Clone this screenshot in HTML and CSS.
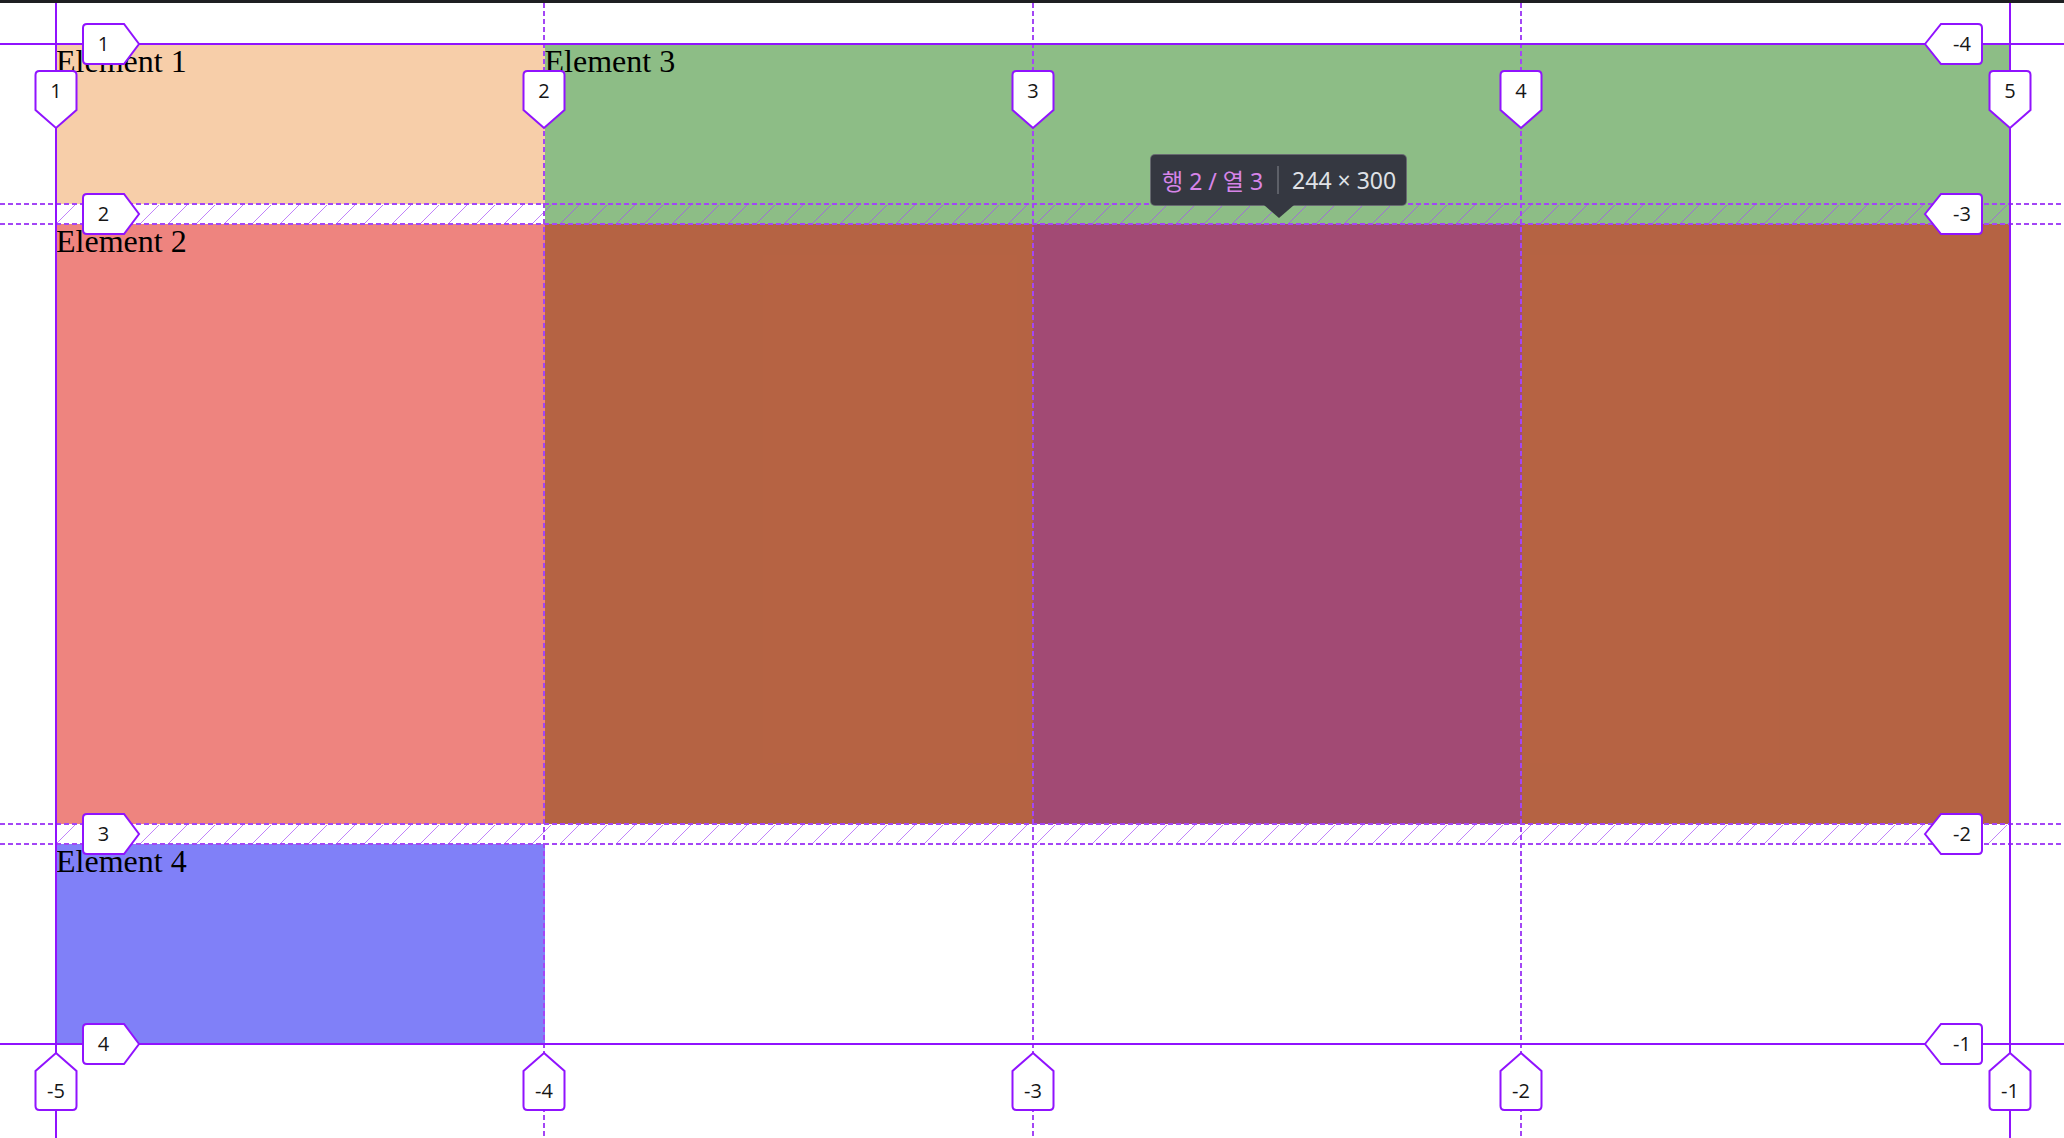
FILE: index.html
```html
<!DOCTYPE html>
<html lang="ko">
<head>
<meta charset="utf-8">
<title>Grid inspector</title>
<link rel="stylesheet" href="styles.css">
</head>
<body>
<div class="topbar"></div>
<main class="stage">
  <div class="grid">
    <div class="item e1">Element 1</div>
    <div class="item e3">Element 3</div>
    <div class="item e2">Element 2</div>
    <div class="cell-hl"></div>
    <div class="item e4">Element 4</div>
  </div>
</main>

<svg class="overlay" width="2064" height="1138" viewBox="0 0 2064 1138" xmlns="http://www.w3.org/2000/svg">
  <defs>
    <pattern id="hatch" patternUnits="userSpaceOnUse" x="0" y="204" width="28" height="20">
      <line x1="1" y1="19" x2="19" y2="1" class="hatch-line"/>
    </pattern>
    <path id="bl" d="M4,-20 L41,-20 L56,0 L41,20 L4,20 Q0,20 0,16 L0,-16 Q0,-20 4,-20 Z"/>
    <path id="br" d="M0,0 L16,-20 L53,-20 Q57,-20 57,-16 L57,16 Q57,20 53,20 L16,20 Z"/>
    <path id="bt" d="M-16.5,71 L16.5,71 Q20.5,71 20.5,75 L20.5,110 L0,128 L-20.5,110 L-20.5,75 Q-20.5,71 -16.5,71 Z"/>
    <path id="bb" d="M0,1053 L20.5,1071 L20.5,1106 Q20.5,1110 16.5,1110 L-16.5,1110 Q-20.5,1110 -20.5,1106 L-20.5,1071 Z"/>
  </defs>

  <!-- gap hatching -->
  <rect x="56" y="204" width="1954" height="20" fill="url(#hatch)"/>
  <rect x="56" y="824" width="1954" height="20" fill="url(#hatch)"/>

  <!-- dashed (gap / inner) lines -->
  <g class="dash">
    <line x1="0" y1="204" x2="2064" y2="204"/>
    <line x1="0" y1="224" x2="2064" y2="224"/>
    <line x1="0" y1="824" x2="2064" y2="824"/>
    <line x1="0" y1="844" x2="2064" y2="844"/>
    <line x1="544" y1="3" x2="544" y2="1138"/>
    <line x1="1033" y1="3" x2="1033" y2="1138"/>
    <line x1="1521" y1="3" x2="1521" y2="1138"/>
  </g>

  <!-- solid outer lines -->
  <g class="solid">
    <line x1="0" y1="44" x2="2064" y2="44"/>
    <line x1="0" y1="1044" x2="2064" y2="1044"/>
    <line x1="56" y1="3" x2="56" y2="1138"/>
    <line x1="2010" y1="3" x2="2010" y2="1138"/>
  </g>

  <!-- badges -->
  <g class="badge">
    <use href="#bl" transform="translate(83,44)"/>
    <use href="#bl" transform="translate(83,214)"/>
    <use href="#bl" transform="translate(83,834)"/>
    <use href="#bl" transform="translate(83,1044)"/>

    <use href="#br" transform="translate(1925,44)"/>
    <use href="#br" transform="translate(1925,214)"/>
    <use href="#br" transform="translate(1925,834)"/>
    <use href="#br" transform="translate(1925,1044)"/>

    <use href="#bt" transform="translate(56,0)"/>
    <use href="#bt" transform="translate(544,0)"/>
    <use href="#bt" transform="translate(1033,0)"/>
    <use href="#bt" transform="translate(1521,0)"/>
    <use href="#bt" transform="translate(2010,0)"/>

    <use href="#bb" transform="translate(56,0)"/>
    <use href="#bb" transform="translate(544,0)"/>
    <use href="#bb" transform="translate(1033,0)"/>
    <use href="#bb" transform="translate(1521,0)"/>
    <use href="#bb" transform="translate(2010,0)"/>
  </g>

  <g class="blabel">
    <text x="103.5" y="43">1</text>
    <text x="103.5" y="213">2</text>
    <text x="103.5" y="833">3</text>
    <text x="103.5" y="1043">4</text>

    <text x="1962" y="43">-4</text>
    <text x="1962" y="213">-3</text>
    <text x="1962" y="833">-2</text>
    <text x="1962" y="1043">-1</text>

    <text x="56" y="90">1</text>
    <text x="544" y="90">2</text>
    <text x="1033" y="90">3</text>
    <text x="1521" y="90">4</text>
    <text x="2010" y="90">5</text>

    <text x="56" y="1090">-5</text>
    <text x="544" y="1090">-4</text>
    <text x="1033" y="1090">-3</text>
    <text x="1521" y="1090">-2</text>
    <text x="2010" y="1090">-1</text>
  </g>
</svg>

<div class="tooltip">
  <span class="tt-pos">행 2 / 열 3</span>
  <span class="tt-sep"></span>
  <span class="tt-size">244 × 300</span>
</div>
</body>
</html>
```

FILE: styles.css
```css
html, body {
  margin: 0;
  padding: 0;
  background: #ffffff;
  overflow: hidden;
}

body {
  width: 2064px;
  height: 1138px;
  position: relative;
}

.topbar {
  height: 3px;
  background: #1e1f22;
}

.stage {
  padding: 41px 0 0 56px;
}

.grid {
  display: grid;
  width: 1954px;
  grid-template-columns: repeat(4, 1fr);
  grid-template-rows: 160px 600px 200px;
  row-gap: 20px;
  column-gap: 0;
}

.item {
  font-family: "Liberation Serif", "Times New Roman", serif;
  font-size: 32px;
  line-height: 34px;
  color: #000;
}

.e1 {
  grid-column: 1;
  grid-row: 1;
  background: #f7cea9;
}

.e3 {
  grid-column: 2 / 5;
  grid-row: 1 / 3;
  background: #8dbd86;
}

.e2 {
  grid-column: 1 / 5;
  grid-row: 2;
  background: rgba(222, 10, 0, 0.5);
}

.cell-hl {
  grid-column: 3;
  grid-row: 2;
  background: #a24a74;
}

.e4 {
  grid-column: 1;
  grid-row: 3;
  background: #8080f8;
}

.overlay {
  position: absolute;
  top: 0;
  left: 0;
  pointer-events: none;
}

.hatch-line {
  stroke: #a54ef6;
  stroke-width: 1;
  opacity: 0.7;
}

.dash line {
  stroke: #a346f5;
  stroke-width: 2;
  stroke-dasharray: 5 3;
}

.solid line {
  stroke: #9013fe;
  stroke-width: 2;
}

.badge use {
  fill: #ffffff;
  stroke: #9013fe;
  stroke-width: 2;
}

.blabel text {
  font-family: "Open Sans", "Noto Sans", sans-serif;
  font-size: 20px;
  fill: #151515;
  text-anchor: middle;
  dominant-baseline: central;
}

.tooltip {
  position: absolute;
  left: 1150px;
  top: 154px;
  height: 52px;
  box-sizing: border-box;
  display: flex;
  align-items: center;
  padding: 0 10px 0 11px;
  background: #353841;
  border: 1px solid rgba(255, 255, 255, 0.25);
  border-radius: 5px;
  font-family: "Noto Sans", "Noto Sans CJK KR", sans-serif;
  font-size: 23px;
  white-space: nowrap;
}

.tooltip::after {
  content: "";
  position: absolute;
  left: 50%;
  bottom: -13px;
  margin-left: -15px;
  border-left: 15px solid transparent;
  border-right: 15px solid transparent;
  border-top: 13px solid #353841;
}

.tt-pos {
  color: #d785e8;
}

.tt-sep {
  width: 2px;
  height: 28px;
  background: #5d6068;
  margin: 0 13px 0 14px;
}

.tt-size {
  color: #dfe1e6;
}
```
